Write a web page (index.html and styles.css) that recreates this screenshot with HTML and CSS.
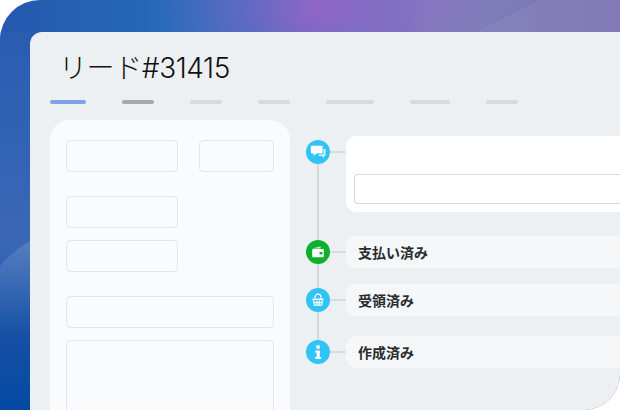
FILE: index.html

```html
<!DOCTYPE html>
<html lang="ja">
<head>
    <meta charset="UTF-8">
    <meta name="viewport" content="width=device-width, initial-scale=1.0">
    <title>リード#31415</title>
    <link rel="stylesheet" href="styles.css">
</head>
<body>
    <div class="hero">
        <svg class="swoosh" width="620" height="410" viewBox="0 0 620 410">
            <defs>
                <linearGradient id="swooshFade" x1="0" y1="0" x2="0" y2="1">
                    <stop offset="0" stop-color="#fff" stop-opacity="0.14"/>
                    <stop offset="1" stop-color="#fff" stop-opacity="0"/>
                </linearGradient>
            </defs>
            <path d="M0 266 Q14 250 30 241 L30 340 L0 340 Z" fill="url(#swooshFade)"/>
            <path d="M476 32 L540 0 L620 0 L620 32 Z" fill="#fff" fill-opacity="0.05"/>
        </svg>
        <div class="card">
            <h1 class="title">リード#31415</h1>
            <div class="tabs">
                <span class="tab tabActive"></span>
                <span class="tab tabDark"></span>
                <span class="tab t32"></span>
                <span class="tab t32"></span>
                <span class="tab t48"></span>
                <span class="tab t40"></span>
                <span class="tab t32"></span>
            </div>
            <div class="content">
                <div class="formPanel">
                    <div class="fieldRow">
                        <div class="field fieldShort"></div>
                        <div class="field fieldTiny"></div>
                    </div>
                    <div class="field fieldShort gapTop24"></div>
                    <div class="field fieldShort gapTop12"></div>
                    <div class="field gapTop24"></div>
                    <div class="field fieldTall gapTop12"></div>
                </div>
                <div class="timeline">
                    <div class="timelineLine"></div>
                    <div class="timelineRow rowComment">
                        <div class="dot blue">
                            <svg width="18" height="18" viewBox="0 0 18 18"><path d="M3 2.800h9.500a1.200 1.200 0 0 1 1.200 1.200v5.200a1.200 1.200 0 0 1-1.200 1.200H7.500l-3 2.300v-2.300H3a1.200 1.200 0 0 1-1.200-1.200V4A1.200 1.200 0 0 1 3 2.800z" fill="#fff"/><path d="M14.600 6h.9a1 1 0 0 1 1 1v5a1 1 0 0 1-1 1H15v2l-2.400-2H9.200l1.300-1.500h2.500a1.600 1.600 0 0 0 1.600-1.600z" fill="#fff" fill-opacity="0.85"/></svg>
                        </div>
                        <div class="connector"></div>
                        <div class="commentBox"><div class="commentInput"></div></div>
                    </div>
                    <div class="timelineRow rowPaid">
                        <div class="dot green">
                            <svg width="16" height="16" viewBox="0 0 16 16"><path d="M3 4.200 10.500 2.500V4.500H3z" fill="#fff" fill-opacity="0.85"/><path d="M3 5h10a.8.800 0 0 1 .8.800V12.500a.8.800 0 0 1-.8.800H3a.8.800 0 0 1-.8-.8V5.800A.8.800 0 0 1 3 5z" fill="#fff"/><rect x="9.500" y="8" width="3" height="2.400" rx=".6" fill="#0fb02c"/></svg>
                        </div>
                        <div class="connector"></div>
                        <div class="pill">支払い済み</div>
                    </div>
                    <div class="timelineRow rowReceived">
                        <div class="dot blue">
                            <svg width="16" height="16" viewBox="0 0 16 16"><path d="M5 6.500V5.200a3 3 0 0 1 6 0V6.500" fill="none" stroke="#fff" stroke-width="1.200"/><rect x="2.300" y="6.400" width="11.400" height="1.500" rx=".7" fill="#fff"/><path d="M3.500 8 4.300 13.300H11.700L12.500 8M6.300 8.500v4.500M8 8.500v4.500M9.700 8.500v4.500M3.800 10.500h8.400" fill="none" stroke="#fff" stroke-width="1.100"/></svg>
                        </div>
                        <div class="connector"></div>
                        <div class="pill">受領済み</div>
                    </div>
                    <div class="timelineRow rowCreated">
                        <div class="dot blue">
                            <svg width="18" height="18" viewBox="0 0 18 18"><circle cx="9" cy="3.900" r="2" fill="#fff"/><path d="M6.300 7.500H10.800V14H12.200V16H6.200V14H7.600V9.500H6.300z" fill="#fff"/></svg>
                        </div>
                        <div class="connector"></div>
                        <div class="pill">作成済み</div>
                    </div>
                </div>
            </div>
        </div>
    </div>
</body>
</html>
```

FILE: styles.css

```css
* {
    margin: 0;
    padding: 0;
    box-sizing: border-box;
}
html, body {
    width: 620px;
    height: 410px;
    overflow: hidden;
    background-color: #fff;
}
body {
    font-family: 'Noto Sans CJK JP', 'Noto Sans', sans-serif;
    color: #222;
}
.hero {
    position: relative;
    width: 620px;
    height: 410px;
    padding: 32px 0 0 30px;
    border-radius: 40px 0 36px 0;
    overflow: hidden;
    background:
        radial-gradient(ellipse 170px 90px at 320px 10px, rgba(150, 100, 200, 0.95), rgba(150, 100, 200, 0) 100%),
        linear-gradient(90deg, rgba(120, 120, 185, 0) 42%, #7f80bb 70%, #7b72b2 100%),
        linear-gradient(90deg, #2558ae 0, #2470bc 220px, #2470bc 100%);
}
.hero::before {
    content: '';
    position: absolute;
    left: 0;
    top: 32px;
    width: 30px;
    height: 378px;
    background: linear-gradient(180deg, #2a5cb0 0, #3a68b6 210px, #1650a5 300px, #044aa3 378px);
}
.swoosh {
    position: absolute;
    top: 0;
    left: 0;
}
.card {
    position: relative;
    width: 590px;
    height: 378px;
    padding-left: 20px;
    background-color: #ecf0f3;
    border-radius: 12px 0 0 0;
    overflow: hidden;
}
.title {
    padding: 16px 0 0 9px;
    height: 68px;
    font-family: 'Inter', 'Noto Sans CJK JP', sans-serif;
    font-size: 28px;
    line-height: 40px;
    font-weight: 300;
    color: #111;
    letter-spacing: -0.4px;
}
.tabs {
    display: flex;
    gap: 36px;
    height: 4px;
}
.tab {
    display: block;
    height: 4px;
    border-radius: 2px;
    background-color: #d7dbdc;
}
.tabActive { width: 36px; background-color: #7ea2ea; }
.tabDark { width: 32px; background-color: #a6a8aa; }
.t32 { width: 32px; }
.t40 { width: 40px; }
.t48 { width: 48px; }
.content {
    display: flex;
    margin-top: 16px;
}
.formPanel {
    width: 240px;
    height: 320px;
    padding: 20px 16px;
    background-color: #f9fbfd;
    border-radius: 20px;
}
.fieldRow {
    display: flex;
    justify-content: space-between;
}
.field {
    height: 32px;
    border: 1px solid #e2e5e9;
    border-radius: 4px;
}
.fieldShort { width: 112px; }
.fieldTiny { width: 75px; }
.fieldTall { height: 100px; }
.gapTop24 { margin-top: 24px; }
.gapTop12 { margin-top: 12px; }
.timeline {
    position: relative;
    flex: 1;
    padding: 16px 0 0 16px;
}
.timelineLine {
    position: absolute;
    left: 27px;
    top: 32px;
    width: 2px;
    height: 200px;
    background-color: #d4d7da;
}
.timelineRow {
    position: relative;
    display: flex;
    align-items: center;
}
.rowComment { align-items: flex-start; }
.rowPaid { margin-top: 24px; }
.rowReceived { margin-top: 16px; }
.rowCreated { margin-top: 20px; }
.dot {
    flex: none;
    display: flex;
    align-items: center;
    justify-content: center;
    width: 24px;
    height: 24px;
    border-radius: 50%;
}
.rowComment .dot { margin-top: 4px; }
.blue { background-color: #30c3f7; }
.green { background-color: #0fb02c; }
.connector {
    flex: none;
    width: 16px;
    height: 2px;
    background-color: #d9dcdf;
}
.rowComment .connector { margin-top: 15px; }
.commentBox {
    flex: 1;
    height: 76px;
    padding: 38px 0 0 8px;
    background-color: #fff;
    border-radius: 10px 0 0 10px;
}
.commentInput {
    height: 30px;
    border: 1px solid #d6d9dc;
    border-right: none;
    border-radius: 4px 0 0 4px;
}
.pill {
    flex: 1;
    height: 32px;
    padding-left: 12px;
    background-color: #f5f7f9;
    border-radius: 10px 0 0 10px;
    font-size: 14px;
    font-weight: 700;
    line-height: 32px;
    color: #2a2d30;
}
```
